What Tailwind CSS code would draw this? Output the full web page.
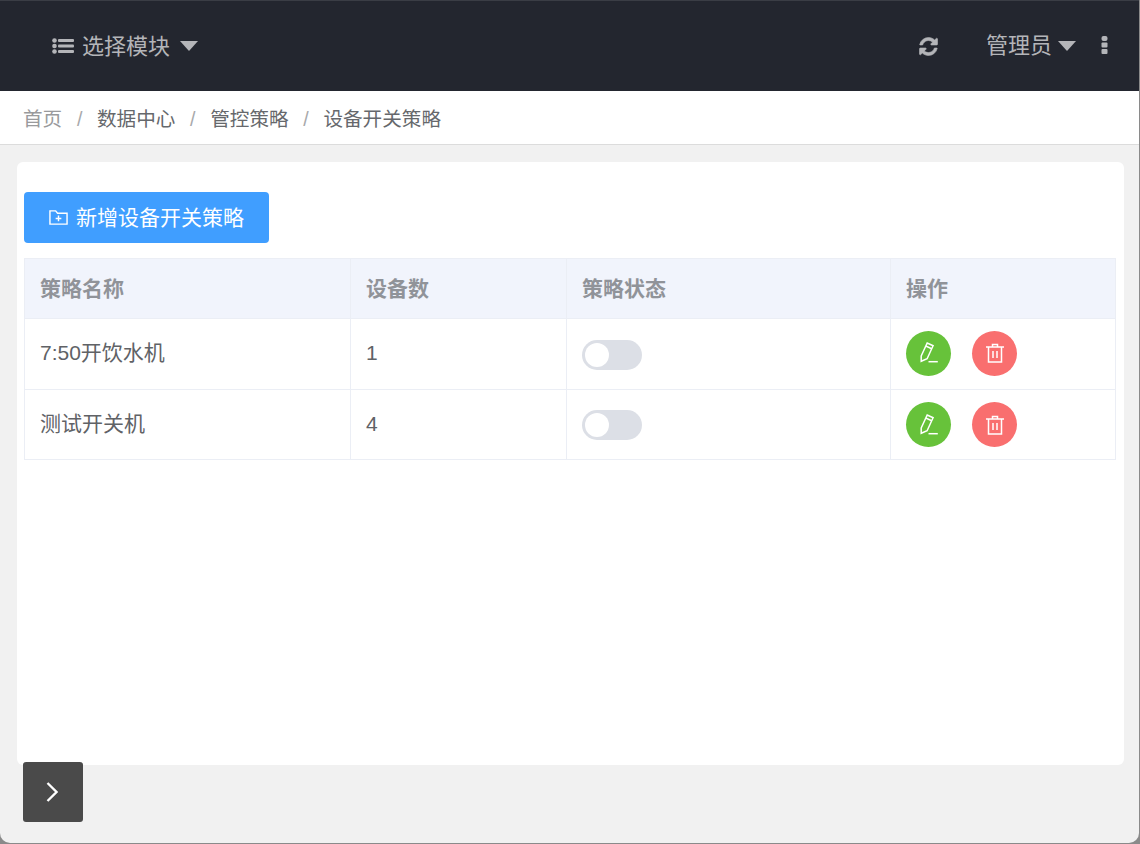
<!DOCTYPE html>
<html lang="zh-CN">
<head>
  <meta charset="UTF-8" />
  <title>设备开关策略</title>
  <script src="https://cdn.jsdelivr.net/npm/@tailwindcss/browser@4"></script>
</head>
<body class="w-[1140px] h-[844px] overflow-hidden bg-[#8a8a8a] font-['Liberation_Sans','Noto_Sans_CJK_SC',sans-serif]">
<div class="relative w-[1139px] h-[843px] bg-[#f1f1f1] rounded-b-[10px] overflow-hidden flex flex-col">

  <!-- top bar -->
  <header class="h-[91px] shrink-0 bg-[#23262f] border-t border-[#3a3d45] flex items-center text-[#b4b5b9] text-[22px]">
    <div class="ml-[52px] flex items-center">
      <svg class="w-[22px] h-[16px]" viewBox="0 0 22 16" fill="currentColor">
        <circle cx="2.5" cy="2.5" r="2.3"/><circle cx="2.5" cy="8" r="2.3"/><circle cx="2.5" cy="13.5" r="2.3"/>
        <rect x="6" y="1" width="16" height="3" rx="1"/><rect x="6" y="6.500" width="16" height="3" rx="1"/><rect x="6" y="12" width="16" height="3" rx="1"/>
      </svg>
      <span class="ml-[8px]">选择模块</span>
      <svg class="ml-[10px] w-[18px] h-[10px]" viewBox="0 0 18 10" fill="currentColor"><path d="M0 0h18L9 10z"/></svg>
    </div>
    <div class="ml-auto flex items-center">
      <svg class="w-[21px] h-[21px]" viewBox="0 0 1792 1792" fill="currentColor" stroke="currentColor" stroke-width="50">
        <path d="M1639 1056q0 5-1 7-64 268-268 434.500t-478 166.500q-146 0-282.500-55t-243.500-157l-129 129q-19 19-45 19t-45-19-19-45v-448q0-26 19-45t45-19h448q26 0 45 19t19 45-19 45l-137 137q71 66 161 102t187 36q134 0 250-65t186-179q11-17 53-117 8-23 30-23h192q13 0 22.500 9.500t9.500 22.500zm25-800v448q0 26-19 45t-45 19h-448q-26 0-45-19t-19-45 19-45l138-138q-148-137-349-137-134 0-250 65t-186 179q-11 17-53 117-8 23-30 23h-199q-13 0-22.500-9.500t-9.500-22.500v-7q65-268 270-434.500t480-166.500q146 0 284 55.500t245 156.500l130-129q19-19 45-19t45 19 19 45z"/>
      </svg>
      <span class="ml-[47px] -translate-y-[1px]">管理员</span>
      <svg class="ml-[6px] w-[18px] h-[10px]" viewBox="0 0 18 10" fill="currentColor"><path d="M0 0h18L9 10z"/></svg>
      <svg class="ml-[25px] mr-[31px] w-[7px] h-[18px] -translate-y-[1px]" viewBox="0 0 7 18" fill="currentColor">
        <rect x="0.500" y="0" width="6" height="5" rx="2"/><rect x="0.500" y="6.500" width="6" height="5" rx="1"/><rect x="0.500" y="13" width="6" height="5" rx="1"/>
      </svg>
    </div>
  </header>

  <!-- breadcrumb -->
  <nav class="h-[54px] shrink-0 bg-white border-b border-[#dcdcdc] pl-[23px] flex items-center text-[19.6px] text-[#66686c] pt-[5px]">
    <span class="text-[#999a9c]">首页</span>
    <span class="mx-[14.700px] text-[#a8a9ab]">/</span>
    <span>数据中心</span>
    <span class="mx-[14.700px] text-[#a8a9ab]">/</span>
    <span>管控策略</span>
    <span class="mx-[14.700px] text-[#a8a9ab]">/</span>
    <span>设备开关策略</span>
  </nav>

  <!-- content card -->
  <main class="mt-[17px] ml-[17px] w-[1107px] h-[603px] bg-white rounded-[6px] pt-[30px] pl-[7px]">
    <button class="w-[245px] h-[51px] bg-[#409eff] rounded-[4px] text-white text-[21px] flex items-center pl-[25px]">
      <svg class="w-[19px] h-[17px]" viewBox="0 0 20 17" fill="none" stroke="currentColor" stroke-width="1.500">
        <path d="M1 1.500h6l2 2.500h10v11.500H1z"/><path d="M10 6.500v6M7 9.500h6"/>
      </svg>
      <span class="ml-[8px]">新增设备开关策略</span>
    </button>

    <table class="mt-[15px] w-[1091px] table-fixed border-collapse text-[21px] text-[#606266]">
      <colgroup><col class="w-[326px]"/><col class="w-[216px]"/><col class="w-[324px]"/><col class="w-[225px]"/></colgroup>
      <thead>
        <tr class="h-[60px] bg-[#f1f4fc] text-[#909399] text-left">
          <th class="border border-[#ebeef5] pl-[15px] font-bold">策略名称</th>
          <th class="border border-[#ebeef5] pl-[15px] font-bold">设备数</th>
          <th class="border border-[#ebeef5] pl-[15px] font-bold">策略状态</th>
          <th class="border border-[#ebeef5] pl-[15px] font-bold">操作</th>
        </tr>
      </thead>
      <tbody>
        <tr class="h-[71px]">
          <td class="border border-[#ebeef5] pl-[15px] pb-[2px]">7:50开饮水机</td>
          <td class="border border-[#ebeef5] pl-[15px] pb-[2px]">1</td>
          <td class="border border-[#ebeef5] pl-[15px]">
            <div class="w-[60px] h-[30px] rounded-full bg-[#dcdfe6] p-[3px] mt-[2px]"><div class="w-[24px] h-[24px] rounded-full bg-white"></div></div>
          </td>
          <td class="border border-[#ebeef5] pl-[15px] pb-[2px]">
            <div class="flex gap-[21px]">
              <button class="w-[45px] h-[45px] rounded-full bg-[#67c23a] text-white flex items-center justify-center">
                <svg class="w-[20px] h-[22px]" viewBox="0 0 20 22" fill="none" stroke="currentColor" stroke-width="1.500"><path d="M2.200 14 8.200 1l5.900 2.700-6 13-5.900 2.600z"/><path d="M6.800 4l5.900 2.700"/><path d="M9.500 19.700h9.300"/></svg>
              </button>
              <button class="w-[45px] h-[45px] rounded-full bg-[#f96f6f] text-white flex items-center justify-center">
                <svg class="w-[20px] h-[20px]" viewBox="0 0 20 20" fill="none" stroke="currentColor" stroke-width="1.500"><path d="M1 4h18M3.500 4v15h13V4M7.500 4V1.500h5V4M8 8v7M12 8v7"/></svg>
              </button>
            </div>
          </td>
        </tr>
        <tr class="h-[70px]">
          <td class="border border-[#ebeef5] pl-[15px] pb-[2px]">测试开关机</td>
          <td class="border border-[#ebeef5] pl-[15px] pb-[2px]">4</td>
          <td class="border border-[#ebeef5] pl-[15px]">
            <div class="w-[60px] h-[30px] rounded-full bg-[#dcdfe6] p-[3px]"><div class="w-[24px] h-[24px] rounded-full bg-white"></div></div>
          </td>
          <td class="border border-[#ebeef5] pl-[15px]">
            <div class="flex gap-[21px]">
              <button class="w-[45px] h-[45px] rounded-full bg-[#67c23a] text-white flex items-center justify-center">
                <svg class="w-[20px] h-[22px]" viewBox="0 0 20 22" fill="none" stroke="currentColor" stroke-width="1.500"><path d="M2.200 14 8.200 1l5.900 2.700-6 13-5.900 2.600z"/><path d="M6.800 4l5.900 2.700"/><path d="M9.500 19.700h9.300"/></svg>
              </button>
              <button class="w-[45px] h-[45px] rounded-full bg-[#f96f6f] text-white flex items-center justify-center">
                <svg class="w-[20px] h-[20px]" viewBox="0 0 20 20" fill="none" stroke="currentColor" stroke-width="1.500"><path d="M1 4h18M3.500 4v15h13V4M7.500 4V1.500h5V4M8 8v7M12 8v7"/></svg>
              </button>
            </div>
          </td>
        </tr>
      </tbody>
    </table>
  </main>

  <!-- floating sidebar toggle -->
  <button class="absolute left-[23px] top-[762px] w-[60px] h-[60px] bg-[#4a4a4a] rounded-[3px] flex items-center justify-center">
    <svg class="w-[12px] h-[20px] -translate-x-[1px]" viewBox="0 0 12 20" fill="none" stroke="white" stroke-width="2.300"><path d="M1.500 1l9 9-9 9"/></svg>
  </button>
</div>
</body>
</html>
